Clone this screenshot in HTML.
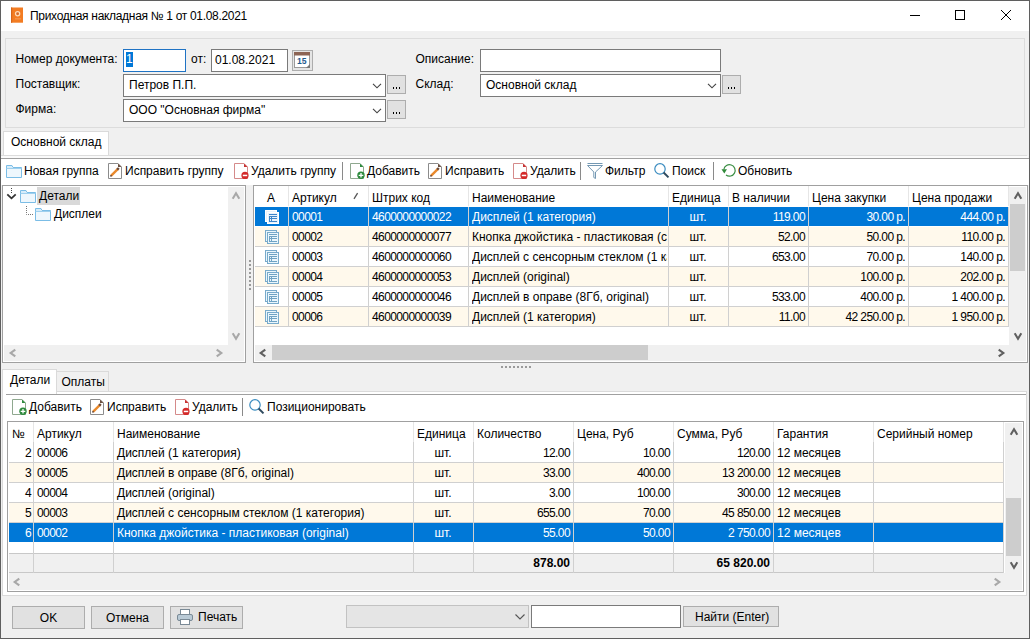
<!DOCTYPE html><html><head><meta charset="utf-8"><style>
*{box-sizing:border-box;margin:0;padding:0}
html,body{width:1030px;height:639px;overflow:hidden;background:#f0f0f0}
body{position:relative;font-family:"Liberation Sans",sans-serif;font-size:12px;color:#000}
div{position:absolute}
.t{white-space:nowrap;line-height:20px;height:20px}
.num{letter-spacing:-0.6px}
svg{position:absolute;overflow:visible}
</style></head><body><div class="" style="left:0px;top:0px;width:1030px;height:639px;border:1px solid #5f5f5f;background:#f0f0f0"></div><div class="" style="left:1px;top:1px;width:1028px;height:30px;background:#fff"></div><svg style="left:11px;top:7px" width="12" height="16" viewBox="0 0 12 16"><rect x="0" y="0.5" width="12" height="15.2" fill="#f37c22"/><rect x="0" y="0.5" width="1.2" height="15.2" fill="#d8661a"/><circle cx="6.6" cy="6.8" r="2.1" fill="#d86a2a" stroke="#fddcb8" stroke-width="1.3"/><rect x="4" y="11.5" width="6" height="0.8" fill="#f7a56a"/></svg><div class="t" style="left:30px;top:6px;font-size:12px;letter-spacing:-0.31px;color:#000;line-height:20px">Приходная накладная № 1 от 01.08.2021</div><div class="" style="left:910px;top:15px;width:10px;height:1px;background:#000"></div><div class="" style="left:955px;top:10px;width:10px;height:10px;border:1px solid #000"></div><svg style="left:1001px;top:10px" width="10" height="10" viewBox="0 0 10 10"><path d="M0 0L10 10M10 0L0 10" stroke="#000" stroke-width="1"/></svg><div class="" style="left:5px;top:38px;width:1020px;height:90px;border:1px solid #dcdcdc"></div><div class="t" style="left:15.5px;top:49px;">Номер документа:</div><div class="t" style="left:15.5px;top:74px;">Поставщик:</div><div class="t" style="left:15.5px;top:99px;">Фирма:</div><div class="t" style="left:191px;top:49px;">от:</div><div class="t" style="left:415.5px;top:49px;">Описание:</div><div class="t" style="left:415.5px;top:74px;">Склад:</div><div class="" style="left:123px;top:49px;width:63px;height:23px;background:#fff;border:1px solid #1f73c4"></div><div class="" style="left:126px;top:52px;width:7px;height:15px;background:#0078d7"></div><div class="t" style="left:126px;top:49px;color:#fff">1</div><div class="" style="left:211px;top:49px;width:77px;height:23px;background:#fff;border:1px solid #7a7a7a"></div><div class="t" style="left:215px;top:50px;">01.08.2021</div><div class="" style="left:292px;top:50px;width:21px;height:21px;background:#e5e5e5;border:1px solid #adadad"></div><svg style="left:294px;top:52px" width="16" height="16" viewBox="0 0 16 16"><rect x="0.5" y="0.5" width="15" height="15" fill="#fff" stroke="#9a9a9a"/><rect x="0" y="0" width="16" height="3.5" fill="#8c6454"/><text x="7.8" y="12.3" font-family="Liberation Sans" font-weight="bold" font-size="8.6" fill="#1f5a8e" text-anchor="middle">15</text><path d="M12 16L16 12L16 16Z" fill="#777"/></svg><div class="" style="left:123px;top:74px;width:263px;height:23px;background:#fff;border:1px solid #7a7a7a"></div><div class="t" style="left:129px;top:75px;">Петров П.П.</div><svg style="left:372px;top:83px" width="10" height="6" viewBox="0 0 10 6"><path d="M1 0.8L5 4.8L9 0.8" fill="none" stroke="#444" stroke-width="1.15"/></svg><div class="" style="left:387px;top:75px;width:19px;height:19px;background:#e1e1e1;border:1px solid #adadad"></div><div class="" style="left:393px;top:87px;width:1.4px;height:2px;background:#000"></div><div class="" style="left:396px;top:87px;width:1.4px;height:2px;background:#000"></div><div class="" style="left:399px;top:87px;width:1.4px;height:2px;background:#000"></div><div class="" style="left:123px;top:99px;width:263px;height:23px;background:#fff;border:1px solid #7a7a7a"></div><div class="t" style="left:129px;top:100px;">ООО "Основная фирма"</div><svg style="left:372px;top:108px" width="10" height="6" viewBox="0 0 10 6"><path d="M1 0.8L5 4.8L9 0.8" fill="none" stroke="#444" stroke-width="1.15"/></svg><div class="" style="left:387px;top:100px;width:19px;height:19px;background:#e1e1e1;border:1px solid #adadad"></div><div class="" style="left:393px;top:112px;width:1.4px;height:2px;background:#000"></div><div class="" style="left:396px;top:112px;width:1.4px;height:2px;background:#000"></div><div class="" style="left:399px;top:112px;width:1.4px;height:2px;background:#000"></div><div class="" style="left:480px;top:49px;width:241px;height:23px;background:#fff;border:1px solid #7a7a7a"></div><div class="" style="left:480px;top:74px;width:241px;height:23px;background:#fff;border:1px solid #7a7a7a"></div><div class="t" style="left:486px;top:75px;">Основной склад</div><svg style="left:707px;top:83px" width="10" height="6" viewBox="0 0 10 6"><path d="M1 0.8L5 4.8L9 0.8" fill="none" stroke="#444" stroke-width="1.15"/></svg><div class="" style="left:722px;top:75px;width:19px;height:19px;background:#e1e1e1;border:1px solid #adadad"></div><div class="" style="left:728px;top:87px;width:1.4px;height:2px;background:#000"></div><div class="" style="left:731px;top:87px;width:1.4px;height:2px;background:#000"></div><div class="" style="left:734px;top:87px;width:1.4px;height:2px;background:#000"></div><div class="" style="left:3px;top:131px;width:106px;height:24px;background:#fff;border:1px solid #dadada;border-bottom:none"></div><div class="t" style="left:11px;top:132px;">Основной склад</div><div class="" style="left:1px;top:155px;width:1026px;height:1px;background:#dcdcdc"></div><div class="" style="left:1px;top:156px;width:1027px;height:2px;background:#fafafa"></div><div class="" style="left:1px;top:158px;width:1028px;height:1px;background:#a0a0a0"></div><div class="" style="left:1px;top:159px;width:1028px;height:205px;background:#fff"></div><div class="" style="left:1px;top:185px;width:1028px;height:179px;background:#f0f0f0"></div><svg style="left:6px;top:164px" width="16" height="14" viewBox="0 0 16 14"><path d="M0.5 1.5V13.5H15.5V3.5H7L6 1.5Z" fill="#eef7fd" stroke="#7bbde6" stroke-width="1"/><path d="M0.5 4.5H15.5" stroke="#9fd0ee" stroke-width="1"/><rect x="1" y="2" width="5" height="2" fill="#d6ecfa"/></svg><div class="t" style="left:24px;top:161px;">Новая группа</div><svg style="left:108px;top:163px" width="14" height="16" viewBox="0 0 14 16"><path d="M0.5 0.5H10L13.5 4V15.5H0.5Z" fill="#fff" stroke="#8c8c8c" stroke-width="1"/><path d="M10 0.5L13.5 4H10Z" fill="#6b5040"/><path d="M3.2 12.6L10 5.8" stroke="#e8892c" stroke-width="2.4"/><path d="M9.2 6.6L10.8 5" stroke="#6b4a3a" stroke-width="2.4"/><circle cx="3" cy="12.8" r="0.9" fill="#5a3a2a"/></svg><div class="t" style="left:125px;top:161px;">Исправить группу</div><svg style="left:234px;top:163px" width="16" height="16" viewBox="0 0 16 16"><path d="M0.5 0.5H10L13.5 4V15.5H0.5Z" fill="#fff" stroke="#d58a8a" stroke-width="1"/><path d="M10 0.5L13.5 4H10Z" fill="#c83232"/><circle cx="11" cy="12.4" r="3.6" fill="#d42a2a"/><rect x="8.8" y="11.7" width="4.4" height="1.5" fill="#fff"/></svg><div class="t" style="left:251px;top:161px;">Удалить группу</div><div class="" style="left:342px;top:162px;width:1px;height:18px;background:#8a8a8a"></div><svg style="left:350px;top:163px" width="16" height="16" viewBox="0 0 16 16"><path d="M0.5 0.5H10L13.5 4V15.5H0.5Z" fill="#fff" stroke="#8fa88f" stroke-width="1"/><path d="M10 0.5L13.5 4H10Z" fill="#2e8b3e"/><circle cx="11" cy="12.3" r="3.7" fill="#2e8b3e"/><path d="M11 10V14.6M8.7 12.3H13.3" stroke="#fff" stroke-width="1.3"/></svg><div class="t" style="left:367px;top:161px;">Добавить</div><svg style="left:428px;top:163px" width="14" height="16" viewBox="0 0 14 16"><path d="M0.5 0.5H10L13.5 4V15.5H0.5Z" fill="#fff" stroke="#8c8c8c" stroke-width="1"/><path d="M10 0.5L13.5 4H10Z" fill="#6b5040"/><path d="M3.2 12.6L10 5.8" stroke="#e8892c" stroke-width="2.4"/><path d="M9.2 6.6L10.8 5" stroke="#6b4a3a" stroke-width="2.4"/><circle cx="3" cy="12.8" r="0.9" fill="#5a3a2a"/></svg><div class="t" style="left:445px;top:161px;">Исправить</div><svg style="left:513px;top:163px" width="16" height="16" viewBox="0 0 16 16"><path d="M0.5 0.5H10L13.5 4V15.5H0.5Z" fill="#fff" stroke="#d58a8a" stroke-width="1"/><path d="M10 0.5L13.5 4H10Z" fill="#c83232"/><circle cx="11" cy="12.4" r="3.6" fill="#d42a2a"/><rect x="8.8" y="11.7" width="4.4" height="1.5" fill="#fff"/></svg><div class="t" style="left:530px;top:161px;">Удалить</div><div class="" style="left:580px;top:162px;width:1px;height:18px;background:#8a8a8a"></div><svg style="left:587px;top:163px" width="16" height="16" viewBox="0 0 16 16"><path d="M0.5 0.5H15.5" stroke="#7398b3" stroke-width="1"/><path d="M0.5 2.5H15.5L8.5 9V15.5L6.8 14.5V9Z" fill="none" stroke="#7398b3" stroke-width="1"/></svg><div class="t" style="left:605px;top:161px;">Фильтр</div><svg style="left:654px;top:163px" width="16" height="16" viewBox="0 0 16 16"><circle cx="6" cy="5.9" r="5.2" fill="none" stroke="#3a8cc0" stroke-width="1.2"/><path d="M9.6 9.5L14.5 14.4" stroke="#2f4a5e" stroke-width="2"/></svg><div class="t" style="left:672px;top:161px;">Поиск</div><div class="" style="left:713px;top:162px;width:1px;height:18px;background:#8a8a8a"></div><svg style="left:721px;top:164px" width="16" height="16" viewBox="0 0 16 16"><path d="M2.8 5.5A5.7 5.7 0 1 1 5 11" fill="none" stroke="#3c8f45" stroke-width="1.2"/><path d="M0.5 5.3H6L3.3 9.5Z" fill="#2f8a3a"/></svg><div class="t" style="left:738px;top:161px;">Обновить</div><div class="" style="left:2px;top:185px;width:244px;height:178px;background:#fff;border:1px solid #a0a0a0"></div><div class="" style="left:228px;top:187px;width:16px;height:158px;background:#f0f0f0"></div><div class="" style="left:4px;top:345px;width:240px;height:16px;background:#f0f0f0"></div><svg style="left:235.5px;top:196px" width="1" height="1"><path d="M-3.3 2.7L0 -2.7L3.3 2.7" fill="none" stroke="#a8a8a8" stroke-width="2.1"/></svg><svg style="left:235.5px;top:335.5px" width="1" height="1"><path d="M-3.3 -2.7L0 2.7L3.3 -2.7" fill="none" stroke="#a8a8a8" stroke-width="2.1"/></svg><svg style="left:12.5px;top:352.5px" width="1" height="1"><path d="M2.295 -3.3L-2.295 0L2.295 3.3" fill="none" stroke="#a8a8a8" stroke-width="2.1"/></svg><svg style="left:218.5px;top:352.5px" width="1" height="1"><path d="M-2.295 -3.3L2.295 0L-2.295 3.3" fill="none" stroke="#a8a8a8" stroke-width="2.1"/></svg><svg style="left:6px;top:188px" width="10" height="12" viewBox="0 0 10 12"><path d="M5.5 0V6" stroke="#444" stroke-width="1" stroke-dasharray="1 1"/><path d="M1.3 6.3L5.5 10.3L9.7 6.3" fill="none" stroke="#333" stroke-width="1.8"/></svg><svg style="left:20px;top:189px" width="16" height="14" viewBox="0 0 16 14"><path d="M0.5 1.5V13.5H15.5V3.5H7L6 1.5Z" fill="#eef7fd" stroke="#7bbde6" stroke-width="1"/><path d="M0.5 4.5H15.5" stroke="#9fd0ee" stroke-width="1"/><rect x="1" y="2" width="5" height="2" fill="#d6ecfa"/></svg><div class="" style="left:37px;top:187px;width:43px;height:18px;background:#d9d9d9"></div><div class="t" style="left:39px;top:186px;">Детали</div><svg style="left:26px;top:206px" width="8" height="10" viewBox="0 0 8 10"><path d="M0.5 0V8.5H7" fill="none" stroke="#777" stroke-width="1" stroke-dasharray="1 1"/></svg><svg style="left:35px;top:207px" width="16" height="14" viewBox="0 0 16 14"><path d="M0.5 1.5V13.5H15.5V3.5H7L6 1.5Z" fill="#eef7fd" stroke="#7bbde6" stroke-width="1"/><path d="M0.5 4.5H15.5" stroke="#9fd0ee" stroke-width="1"/><rect x="1" y="2" width="5" height="2" fill="#d6ecfa"/></svg><div class="t" style="left:54px;top:204px;">Дисплеи</div><div class="" style="left:253px;top:185px;width:775px;height:178px;background:#fff;border:1px solid #a0a0a0"></div><div class="" style="left:255px;top:207px;width:753px;height:19px;background:#0078d7"></div><div class="" style="left:255px;top:226px;width:753px;height:1px;background:#fff"></div><div class="" style="left:255px;top:227px;width:753px;height:19px;background:#fff9ec"></div><div class="" style="left:255px;top:246px;width:753px;height:1px;background:#d0d0d0"></div><div class="" style="left:255px;top:247px;width:753px;height:19px;background:#fff"></div><div class="" style="left:255px;top:266px;width:753px;height:1px;background:#d0d0d0"></div><div class="" style="left:255px;top:267px;width:753px;height:19px;background:#fff9ec"></div><div class="" style="left:255px;top:286px;width:753px;height:1px;background:#d0d0d0"></div><div class="" style="left:255px;top:287px;width:753px;height:19px;background:#fff"></div><div class="" style="left:255px;top:306px;width:753px;height:1px;background:#d0d0d0"></div><div class="" style="left:255px;top:307px;width:753px;height:19px;background:#fff9ec"></div><div class="" style="left:255px;top:326px;width:753px;height:1px;background:#d0d0d0"></div><div class="" style="left:288px;top:186px;width:1px;height:20px;background:#e6e6e6"></div><div class="" style="left:288px;top:207px;width:1px;height:120px;background:#d0d0d0"></div><div class="" style="left:368px;top:186px;width:1px;height:20px;background:#e6e6e6"></div><div class="" style="left:368px;top:207px;width:1px;height:120px;background:#d0d0d0"></div><div class="" style="left:468px;top:186px;width:1px;height:20px;background:#e6e6e6"></div><div class="" style="left:468px;top:207px;width:1px;height:120px;background:#d0d0d0"></div><div class="" style="left:668px;top:186px;width:1px;height:20px;background:#e6e6e6"></div><div class="" style="left:668px;top:207px;width:1px;height:120px;background:#d0d0d0"></div><div class="" style="left:728px;top:186px;width:1px;height:20px;background:#e6e6e6"></div><div class="" style="left:728px;top:207px;width:1px;height:120px;background:#d0d0d0"></div><div class="" style="left:808px;top:186px;width:1px;height:20px;background:#e6e6e6"></div><div class="" style="left:808px;top:207px;width:1px;height:120px;background:#d0d0d0"></div><div class="" style="left:908px;top:186px;width:1px;height:20px;background:#e6e6e6"></div><div class="" style="left:908px;top:207px;width:1px;height:120px;background:#d0d0d0"></div><div class="" style="left:1008px;top:186px;width:1px;height:20px;background:#e6e6e6"></div><div class="" style="left:1008px;top:207px;width:1px;height:120px;background:#d0d0d0"></div><div class="t" style="left:267px;top:188px;">A</div><div class="t" style="left:292px;top:188px;">Артикул</div><div class="t" style="left:372px;top:188px;">Штрих код</div><div class="t" style="left:472px;top:188px;">Наименование</div><div class="t" style="left:672px;top:188px;">Единица</div><div class="t" style="left:732px;top:188px;">В наличии</div><div class="t" style="left:812px;top:188px;">Цена закупки</div><div class="t" style="left:912px;top:188px;">Цена продажи</div><svg style="left:353px;top:192px" width="6" height="8" viewBox="0 0 6 8"><path d="M1 6.8L4.6 1.2" stroke="#555" stroke-width="1.3"/></svg><svg style="left:265px;top:210px" width="15" height="15" viewBox="0 0 15 15" shape-rendering="crispEdges"><rect x="0.5" y="0.5" width="11" height="11" fill="#e8f3fc" stroke="#ffffff"/><rect x="2.5" y="2.5" width="11" height="11" fill="#e8f3fc" stroke="#ffffff"/><path d="M4 4.5H12M4 6.5H12M4 8.5H12M4 11.5H12M4.5 6.5V11.5M6.5 6.5V11.5" stroke="#3f86c9" stroke-width="1"/></svg><div class="t num" style="left:292px;top:207px;color:#fff">00001</div><div class="t num" style="left:372px;top:207px;color:#fff">4600000000022</div><div class="t" style="left:472px;top:207px;width:195px;overflow:hidden;color:#fff">Дисплей (1 категория)</div><div class="t" style="left:668px;top:207px;width:60px;text-align:center;color:#fff">шт.</div><div class="t num" style="left:728px;top:207px;width:77px;text-align:right;color:#fff">119.00</div><div class="t num" style="left:808px;top:207px;width:97px;text-align:right;color:#fff">30.00 р.</div><div class="t num" style="left:908px;top:207px;width:97px;text-align:right;color:#fff">444.00 р.</div><svg style="left:265px;top:230px" width="15" height="15" viewBox="0 0 15 15" shape-rendering="crispEdges"><rect x="0.5" y="0.5" width="11" height="11" fill="#eaf6fc" stroke="#78aacb"/><rect x="2.5" y="2.5" width="11" height="11" fill="#eaf6fc" stroke="#78aacb"/><path d="M4 4.5H12M4 6.5H12M4 8.5H12M4 11.5H12M4.5 6.5V11.5M6.5 6.5V11.5" stroke="#6fa3c4" stroke-width="1"/></svg><div class="t num" style="left:292px;top:227px;color:#000">00002</div><div class="t num" style="left:372px;top:227px;color:#000">4600000000077</div><div class="t" style="left:472px;top:227px;width:195px;overflow:hidden;color:#000">Кнопка джойстика - пластиковая (серая)</div><div class="t" style="left:668px;top:227px;width:60px;text-align:center;color:#000">шт.</div><div class="t num" style="left:728px;top:227px;width:77px;text-align:right;color:#000">52.00</div><div class="t num" style="left:808px;top:227px;width:97px;text-align:right;color:#000">50.00 р.</div><div class="t num" style="left:908px;top:227px;width:97px;text-align:right;color:#000">110.00 р.</div><svg style="left:265px;top:250px" width="15" height="15" viewBox="0 0 15 15" shape-rendering="crispEdges"><rect x="0.5" y="0.5" width="11" height="11" fill="#eaf6fc" stroke="#78aacb"/><rect x="2.5" y="2.5" width="11" height="11" fill="#eaf6fc" stroke="#78aacb"/><path d="M4 4.5H12M4 6.5H12M4 8.5H12M4 11.5H12M4.5 6.5V11.5M6.5 6.5V11.5" stroke="#6fa3c4" stroke-width="1"/></svg><div class="t num" style="left:292px;top:247px;color:#000">00003</div><div class="t num" style="left:372px;top:247px;color:#000">4600000000060</div><div class="t" style="left:472px;top:247px;width:195px;overflow:hidden;color:#000">Дисплей с сенсорным стеклом (1 категория)</div><div class="t" style="left:668px;top:247px;width:60px;text-align:center;color:#000">шт.</div><div class="t num" style="left:728px;top:247px;width:77px;text-align:right;color:#000">653.00</div><div class="t num" style="left:808px;top:247px;width:97px;text-align:right;color:#000">70.00 р.</div><div class="t num" style="left:908px;top:247px;width:97px;text-align:right;color:#000">140.00 р.</div><svg style="left:265px;top:270px" width="15" height="15" viewBox="0 0 15 15" shape-rendering="crispEdges"><rect x="0.5" y="0.5" width="11" height="11" fill="#eaf6fc" stroke="#78aacb"/><rect x="2.5" y="2.5" width="11" height="11" fill="#eaf6fc" stroke="#78aacb"/><path d="M4 4.5H12M4 6.5H12M4 8.5H12M4 11.5H12M4.5 6.5V11.5M6.5 6.5V11.5" stroke="#6fa3c4" stroke-width="1"/></svg><div class="t num" style="left:292px;top:267px;color:#000">00004</div><div class="t num" style="left:372px;top:267px;color:#000">4600000000053</div><div class="t" style="left:472px;top:267px;width:195px;overflow:hidden;color:#000">Дисплей (original)</div><div class="t" style="left:668px;top:267px;width:60px;text-align:center;color:#000">шт.</div><div class="t num" style="left:728px;top:267px;width:77px;text-align:right;color:#000"></div><div class="t num" style="left:808px;top:267px;width:97px;text-align:right;color:#000">100.00 р.</div><div class="t num" style="left:908px;top:267px;width:97px;text-align:right;color:#000">202.00 р.</div><svg style="left:265px;top:290px" width="15" height="15" viewBox="0 0 15 15" shape-rendering="crispEdges"><rect x="0.5" y="0.5" width="11" height="11" fill="#eaf6fc" stroke="#78aacb"/><rect x="2.5" y="2.5" width="11" height="11" fill="#eaf6fc" stroke="#78aacb"/><path d="M4 4.5H12M4 6.5H12M4 8.5H12M4 11.5H12M4.5 6.5V11.5M6.5 6.5V11.5" stroke="#6fa3c4" stroke-width="1"/></svg><div class="t num" style="left:292px;top:287px;color:#000">00005</div><div class="t num" style="left:372px;top:287px;color:#000">4600000000046</div><div class="t" style="left:472px;top:287px;width:195px;overflow:hidden;color:#000">Дисплей в оправе (8Гб, original)</div><div class="t" style="left:668px;top:287px;width:60px;text-align:center;color:#000">шт.</div><div class="t num" style="left:728px;top:287px;width:77px;text-align:right;color:#000">533.00</div><div class="t num" style="left:808px;top:287px;width:97px;text-align:right;color:#000">400.00 р.</div><div class="t num" style="left:908px;top:287px;width:97px;text-align:right;color:#000">1 400.00 р.</div><svg style="left:265px;top:310px" width="15" height="15" viewBox="0 0 15 15" shape-rendering="crispEdges"><rect x="0.5" y="0.5" width="11" height="11" fill="#eaf6fc" stroke="#78aacb"/><rect x="2.5" y="2.5" width="11" height="11" fill="#eaf6fc" stroke="#78aacb"/><path d="M4 4.5H12M4 6.5H12M4 8.5H12M4 11.5H12M4.5 6.5V11.5M6.5 6.5V11.5" stroke="#6fa3c4" stroke-width="1"/></svg><div class="t num" style="left:292px;top:307px;color:#000">00006</div><div class="t num" style="left:372px;top:307px;color:#000">4600000000039</div><div class="t" style="left:472px;top:307px;width:195px;overflow:hidden;color:#000">Дисплей (1 категория)</div><div class="t" style="left:668px;top:307px;width:60px;text-align:center;color:#000">шт.</div><div class="t num" style="left:728px;top:307px;width:77px;text-align:right;color:#000">11.00</div><div class="t num" style="left:808px;top:307px;width:97px;text-align:right;color:#000">42 250.00 р.</div><div class="t num" style="left:908px;top:307px;width:97px;text-align:right;color:#000">1 950.00 р.</div><div class="" style="left:1009px;top:187px;width:17px;height:158px;background:#f0f0f0"></div><div class="" style="left:1010px;top:204px;width:15px;height:67px;background:#cdcdcd"></div><svg style="left:1017.5px;top:196px" width="1" height="1"><path d="M-3.3 2.7L0 -2.7L3.3 2.7" fill="none" stroke="#606060" stroke-width="2.1"/></svg><svg style="left:1017.5px;top:335.5px" width="1" height="1"><path d="M-3.3 -2.7L0 2.7L3.3 -2.7" fill="none" stroke="#606060" stroke-width="2.1"/></svg><div class="" style="left:255px;top:345px;width:771px;height:16px;background:#f0f0f0"></div><div class="" style="left:272px;top:345px;width:376px;height:15px;background:#cdcdcd"></div><svg style="left:263px;top:352.5px" width="1" height="1"><path d="M2.295 -3.3L-2.295 0L2.295 3.3" fill="none" stroke="#606060" stroke-width="2.1"/></svg><svg style="left:1000.5px;top:352.5px" width="1" height="1"><path d="M-2.295 -3.3L2.295 0L-2.295 3.3" fill="none" stroke="#606060" stroke-width="2.1"/></svg><div class="" style="left:501px;top:366px;width:2px;height:2px;background:#9a9a9a"></div><div class="" style="left:505px;top:366px;width:2px;height:2px;background:#9a9a9a"></div><div class="" style="left:509px;top:366px;width:2px;height:2px;background:#9a9a9a"></div><div class="" style="left:513px;top:366px;width:2px;height:2px;background:#9a9a9a"></div><div class="" style="left:517px;top:366px;width:2px;height:2px;background:#9a9a9a"></div><div class="" style="left:521px;top:366px;width:2px;height:2px;background:#9a9a9a"></div><div class="" style="left:525px;top:366px;width:2px;height:2px;background:#9a9a9a"></div><div class="" style="left:529px;top:366px;width:2px;height:2px;background:#9a9a9a"></div><div class="" style="left:249px;top:260px;width:2px;height:2px;background:#9a9a9a"></div><div class="" style="left:249px;top:264px;width:2px;height:2px;background:#9a9a9a"></div><div class="" style="left:249px;top:268px;width:2px;height:2px;background:#9a9a9a"></div><div class="" style="left:249px;top:272px;width:2px;height:2px;background:#9a9a9a"></div><div class="" style="left:249px;top:276px;width:2px;height:2px;background:#9a9a9a"></div><div class="" style="left:249px;top:280px;width:2px;height:2px;background:#9a9a9a"></div><div class="" style="left:249px;top:284px;width:2px;height:2px;background:#9a9a9a"></div><div class="" style="left:249px;top:288px;width:2px;height:2px;background:#9a9a9a"></div><div class="" style="left:2px;top:391px;width:1025px;height:205px;background:#fff;border:1px solid #dadada"></div><div class="" style="left:56px;top:371px;width:53px;height:20px;background:#f0f0f0;border:1px solid #dadada;border-bottom:none"></div><div class="t" style="left:61.5px;top:372px;">Оплаты</div><div class="" style="left:2px;top:369px;width:55px;height:25px;background:#fff;border:1px solid #dadada;border-bottom:none"></div><div class="t" style="left:10px;top:370px;">Детали</div><div class="" style="left:6px;top:394px;width:1020px;height:1px;background:#a0a0a0"></div><svg style="left:12px;top:399px" width="16" height="16" viewBox="0 0 16 16"><path d="M0.5 0.5H10L13.5 4V15.5H0.5Z" fill="#fff" stroke="#8fa88f" stroke-width="1"/><path d="M10 0.5L13.5 4H10Z" fill="#2e8b3e"/><circle cx="11" cy="12.3" r="3.7" fill="#2e8b3e"/><path d="M11 10V14.6M8.7 12.3H13.3" stroke="#fff" stroke-width="1.3"/></svg><div class="t" style="left:29px;top:397px;">Добавить</div><svg style="left:90px;top:399px" width="14" height="16" viewBox="0 0 14 16"><path d="M0.5 0.5H10L13.5 4V15.5H0.5Z" fill="#fff" stroke="#8c8c8c" stroke-width="1"/><path d="M10 0.5L13.5 4H10Z" fill="#6b5040"/><path d="M3.2 12.6L10 5.8" stroke="#e8892c" stroke-width="2.4"/><path d="M9.2 6.6L10.8 5" stroke="#6b4a3a" stroke-width="2.4"/><circle cx="3" cy="12.8" r="0.9" fill="#5a3a2a"/></svg><div class="t" style="left:107px;top:397px;">Исправить</div><svg style="left:175px;top:399px" width="16" height="16" viewBox="0 0 16 16"><path d="M0.5 0.5H10L13.5 4V15.5H0.5Z" fill="#fff" stroke="#d58a8a" stroke-width="1"/><path d="M10 0.5L13.5 4H10Z" fill="#c83232"/><circle cx="11" cy="12.4" r="3.6" fill="#d42a2a"/><rect x="8.8" y="11.7" width="4.4" height="1.5" fill="#fff"/></svg><div class="t" style="left:192px;top:397px;">Удалить</div><div class="" style="left:242px;top:398px;width:1px;height:18px;background:#8a8a8a"></div><svg style="left:249px;top:399px" width="16" height="16" viewBox="0 0 16 16"><circle cx="6" cy="5.9" r="5.2" fill="none" stroke="#3a8cc0" stroke-width="1.2"/><path d="M9.6 9.5L14.5 14.4" stroke="#2f4a5e" stroke-width="2"/></svg><div class="t" style="left:267px;top:397px;">Позиционировать</div><div class="" style="left:7px;top:421px;width:1017px;height:171px;background:#fff;border:1px solid #a0a0a0"></div><div class="" style="left:9px;top:443px;width:994px;height:19px;background:#fff"></div><div class="" style="left:9px;top:462px;width:994px;height:1px;background:#d0d0d0"></div><div class="" style="left:9px;top:463px;width:994px;height:19px;background:#fff9ec"></div><div class="" style="left:9px;top:482px;width:994px;height:1px;background:#d0d0d0"></div><div class="" style="left:9px;top:483px;width:994px;height:19px;background:#fff"></div><div class="" style="left:9px;top:502px;width:994px;height:1px;background:#d0d0d0"></div><div class="" style="left:9px;top:503px;width:994px;height:19px;background:#fff9ec"></div><div class="" style="left:9px;top:522px;width:994px;height:1px;background:#d0d0d0"></div><div class="" style="left:9px;top:523px;width:994px;height:19px;background:#0078d7"></div><div class="" style="left:9px;top:542px;width:994px;height:11px;background:#fff"></div><div class="" style="left:9px;top:553px;width:994px;height:1px;background:#c8c8c8"></div><div class="" style="left:9px;top:554px;width:994px;height:18px;background:#f0f0f0"></div><div class="" style="left:9px;top:572px;width:994px;height:1px;background:#c8c8c8"></div><div class="" style="left:33px;top:422px;width:1px;height:20px;background:#e6e6e6"></div><div class="" style="left:33px;top:442px;width:1px;height:131px;background:#d0d0d0"></div><div class="" style="left:113px;top:422px;width:1px;height:20px;background:#e6e6e6"></div><div class="" style="left:113px;top:442px;width:1px;height:131px;background:#d0d0d0"></div><div class="" style="left:413px;top:422px;width:1px;height:20px;background:#e6e6e6"></div><div class="" style="left:413px;top:442px;width:1px;height:131px;background:#d0d0d0"></div><div class="" style="left:473px;top:422px;width:1px;height:20px;background:#e6e6e6"></div><div class="" style="left:473px;top:442px;width:1px;height:131px;background:#d0d0d0"></div><div class="" style="left:573px;top:422px;width:1px;height:20px;background:#e6e6e6"></div><div class="" style="left:573px;top:442px;width:1px;height:131px;background:#d0d0d0"></div><div class="" style="left:673px;top:422px;width:1px;height:20px;background:#e6e6e6"></div><div class="" style="left:673px;top:442px;width:1px;height:131px;background:#d0d0d0"></div><div class="" style="left:773px;top:422px;width:1px;height:20px;background:#e6e6e6"></div><div class="" style="left:773px;top:442px;width:1px;height:131px;background:#d0d0d0"></div><div class="" style="left:873px;top:422px;width:1px;height:20px;background:#e6e6e6"></div><div class="" style="left:873px;top:442px;width:1px;height:131px;background:#d0d0d0"></div><div class="" style="left:1003px;top:422px;width:1px;height:20px;background:#e6e6e6"></div><div class="" style="left:1003px;top:442px;width:1px;height:131px;background:#d0d0d0"></div><div class="t" style="left:12px;top:424px;">№</div><div class="t" style="left:37px;top:424px;">Артикул</div><div class="t" style="left:117px;top:424px;">Наименование</div><div class="t" style="left:417px;top:424px;">Единица</div><div class="t" style="left:477px;top:424px;">Количество</div><div class="t" style="left:577px;top:424px;">Цена, Руб</div><div class="t" style="left:677px;top:424px;">Сумма, Руб</div><div class="t" style="left:777px;top:424px;">Гарантия</div><div class="t" style="left:877px;top:424px;">Серийный номер</div><div class="t num" style="left:8px;top:443px;width:23px;text-align:right;color:#000">2</div><div class="t num" style="left:37px;top:443px;color:#000">00006</div><div class="t" style="left:117px;top:443px;color:#000">Дисплей (1 категория)</div><div class="t" style="left:413px;top:443px;width:60px;text-align:center;color:#000">шт.</div><div class="t num" style="left:473px;top:443px;width:97px;text-align:right;color:#000">12.00</div><div class="t num" style="left:573px;top:443px;width:97px;text-align:right;color:#000">10.00</div><div class="t num" style="left:673px;top:443px;width:97px;text-align:right;color:#000">120.00</div><div class="t" style="left:777px;top:443px;color:#000">12 месяцев</div><div class="t num" style="left:8px;top:463px;width:23px;text-align:right;color:#000">3</div><div class="t num" style="left:37px;top:463px;color:#000">00005</div><div class="t" style="left:117px;top:463px;color:#000">Дисплей в оправе (8Гб, original)</div><div class="t" style="left:413px;top:463px;width:60px;text-align:center;color:#000">шт.</div><div class="t num" style="left:473px;top:463px;width:97px;text-align:right;color:#000">33.00</div><div class="t num" style="left:573px;top:463px;width:97px;text-align:right;color:#000">400.00</div><div class="t num" style="left:673px;top:463px;width:97px;text-align:right;color:#000">13 200.00</div><div class="t" style="left:777px;top:463px;color:#000">12 месяцев</div><div class="t num" style="left:8px;top:483px;width:23px;text-align:right;color:#000">4</div><div class="t num" style="left:37px;top:483px;color:#000">00004</div><div class="t" style="left:117px;top:483px;color:#000">Дисплей (original)</div><div class="t" style="left:413px;top:483px;width:60px;text-align:center;color:#000">шт.</div><div class="t num" style="left:473px;top:483px;width:97px;text-align:right;color:#000">3.00</div><div class="t num" style="left:573px;top:483px;width:97px;text-align:right;color:#000">100.00</div><div class="t num" style="left:673px;top:483px;width:97px;text-align:right;color:#000">300.00</div><div class="t" style="left:777px;top:483px;color:#000">12 месяцев</div><div class="t num" style="left:8px;top:503px;width:23px;text-align:right;color:#000">5</div><div class="t num" style="left:37px;top:503px;color:#000">00003</div><div class="t" style="left:117px;top:503px;color:#000">Дисплей с сенсорным стеклом (1 категория)</div><div class="t" style="left:413px;top:503px;width:60px;text-align:center;color:#000">шт.</div><div class="t num" style="left:473px;top:503px;width:97px;text-align:right;color:#000">655.00</div><div class="t num" style="left:573px;top:503px;width:97px;text-align:right;color:#000">70.00</div><div class="t num" style="left:673px;top:503px;width:97px;text-align:right;color:#000">45 850.00</div><div class="t" style="left:777px;top:503px;color:#000">12 месяцев</div><div class="t num" style="left:8px;top:523px;width:23px;text-align:right;color:#fff">6</div><div class="t num" style="left:37px;top:523px;color:#fff">00002</div><div class="t" style="left:117px;top:523px;color:#fff">Кнопка джойстика - пластиковая (original)</div><div class="t" style="left:413px;top:523px;width:60px;text-align:center;color:#fff">шт.</div><div class="t num" style="left:473px;top:523px;width:97px;text-align:right;color:#fff">55.00</div><div class="t num" style="left:573px;top:523px;width:97px;text-align:right;color:#fff">50.00</div><div class="t num" style="left:673px;top:523px;width:97px;text-align:right;color:#fff">2 750.00</div><div class="t" style="left:777px;top:523px;color:#fff">12 месяцев</div><div class="t" style="left:473px;top:553px;width:97px;text-align:right;font-weight:bold">878.00</div><div class="t" style="left:673px;top:553px;width:97px;text-align:right;font-weight:bold">65 820.00</div><div class="" style="left:1005px;top:423px;width:17px;height:150px;background:#f0f0f0"></div><div class="" style="left:1006px;top:498px;width:15px;height:58px;background:#cdcdcd"></div><svg style="left:1013.5px;top:432px" width="1" height="1"><path d="M-3.3 2.7L0 -2.7L3.3 2.7" fill="none" stroke="#606060" stroke-width="2.1"/></svg><svg style="left:1013.5px;top:565px" width="1" height="1"><path d="M-3.3 -2.7L0 2.7L3.3 -2.7" fill="none" stroke="#606060" stroke-width="2.1"/></svg><div class="" style="left:9px;top:573px;width:1013px;height:17px;background:#f0f0f0"></div><svg style="left:17px;top:581.5px" width="1" height="1"><path d="M2.295 -3.3L-2.295 0L2.295 3.3" fill="none" stroke="#a8a8a8" stroke-width="2.1"/></svg><svg style="left:996.5px;top:581.5px" width="1" height="1"><path d="M-2.295 -3.3L2.295 0L-2.295 3.3" fill="none" stroke="#a8a8a8" stroke-width="2.1"/></svg><div class="" style="left:12px;top:606px;width:73px;height:23px;background:#e1e1e1;border:1px solid #adadad"></div><div class="t" style="left:12px;top:608px;width:73px;text-align:center">OK</div><div class="" style="left:91px;top:606px;width:73px;height:23px;background:#e1e1e1;border:1px solid #adadad"></div><div class="t" style="left:91px;top:608px;width:73px;text-align:center">Отмена</div><div class="" style="left:170px;top:606px;width:73px;height:23px;background:#e1e1e1;border:1px solid #adadad"></div><div class="t" style="left:198px;top:607px;">Печать</div><svg style="left:177px;top:609px" width="16" height="16" viewBox="0 0 16 16"><rect x="3.5" y="0.5" width="9" height="6" fill="#fff" stroke="#7a8a96"/><rect x="0.5" y="5.5" width="15" height="6" rx="1.5" fill="#b9cad6" stroke="#7a8a96"/><rect x="3.5" y="10.5" width="9" height="5" fill="#fff" stroke="#7a8a96"/></svg><div class="" style="left:346px;top:605px;width:183px;height:23px;background:#e5e5e5;border:1px solid #c2c2c2"></div><svg style="left:515px;top:614px" width="10" height="6" viewBox="0 0 10 6"><path d="M0.5 0.5L5 5L9.5 0.5" fill="none" stroke="#555" stroke-width="1.1"/></svg><div class="" style="left:531px;top:605px;width:150px;height:23px;background:#fff;border:1px solid #7a7a7a"></div><div class="" style="left:683px;top:606px;width:96px;height:21px;background:#e1e1e1;border:1px solid #adadad"></div><div class="t" style="left:695px;top:607px;">Найти (Enter)</div></body></html>
